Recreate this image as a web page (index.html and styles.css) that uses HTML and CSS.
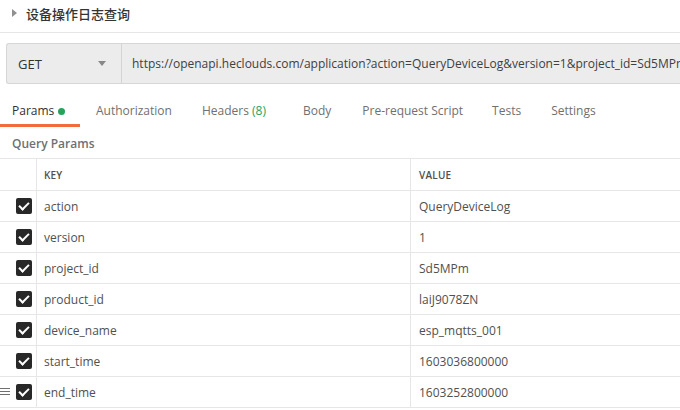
FILE: index.html
```html
<!DOCTYPE html>
<html>
<head>
<meta charset="utf-8">
<link rel="stylesheet" href="styles.css">
</head>
<body>
<div class="title">
  <span class="tri"></span>
  <span class="title-text">设备操作日志查询</span>
</div>
<div class="urlbar">
  <div class="method">
    <span>GET</span>
    <span class="caret"></span>
  </div>
  <div class="url"><span class="url-text">https://openapi.heclouds.com/application?action=QueryDeviceLog&amp;version=1&amp;project_id=Sd5MPm&amp;product_id=laiJ9078ZN</span></div>
</div>
<div class="tabs">
  <div class="tab active">Params <span class="dot"></span></div>
  <div class="tab">Authorization</div>
  <div class="tab">Headers <span class="count">(8)</span></div>
  <div class="tab">Body</div>
  <div class="tab">Pre-request Script</div>
  <div class="tab">Tests</div>
  <div class="tab">Settings</div>
</div>
<div class="qp">Query Params</div>
<div class="table">
  <div class="row head">
    <div class="c0"></div>
    <div class="c1">KEY</div>
    <div class="c2">VALUE</div>
  </div>
  <div class="row"><div class="c0"><span class="cb"></span></div><div class="c1">action</div><div class="c2">QueryDeviceLog</div></div>
  <div class="row"><div class="c0"><span class="cb"></span></div><div class="c1">version</div><div class="c2">1</div></div>
  <div class="row"><div class="c0"><span class="cb"></span></div><div class="c1">project_id</div><div class="c2">Sd5MPm</div></div>
  <div class="row"><div class="c0"><span class="cb"></span></div><div class="c1">product_id</div><div class="c2">laiJ9078ZN</div></div>
  <div class="row"><div class="c0"><span class="cb"></span></div><div class="c1">device_name</div><div class="c2">esp_mqtts_001</div></div>
  <div class="row"><div class="c0"><span class="cb"></span></div><div class="c1">start_time</div><div class="c2">1603036800000</div></div>
  <div class="row"><div class="c0"><span class="handle"><i></i><i></i><i></i></span><span class="cb"></span></div><div class="c1">end_time</div><div class="c2">1603252800000</div></div>
</div>
</body>
</html>
```
FILE: styles.css
```css
* { box-sizing: border-box; }
html, body { margin: 0; padding: 0; background: #fff; overflow: hidden; }
body {
  width: 680px; height: 410px;
  font-family: "Open Sans", "Noto Sans CJK SC", sans-serif;
  font-size: 12px;
  color: #505050;
}
.title {
  height: 33px;
  border-bottom: 1px solid #e6e6e6;
  display: flex;
  align-items: center;
  padding-left: 12px;
  padding-bottom: 6px;
}
.tri {
  width: 0; height: 0;
  border-top: 4px solid transparent;
  border-bottom: 4px solid transparent;
  border-left: 5px solid #909090;
  margin-right: 9px;
}
.title-text {
  font-family: "Noto Sans CJK SC", sans-serif;
  font-size: 13px;
  color: #333;
  font-weight: 500;
}
.urlbar {
  margin: 10px 0 0 6px;
  height: 41px;
  display: flex;
  background: #ececec;
  border: 1px solid #d6d6d6;
  border-right: none;
  border-radius: 3px 0 0 3px;
}
.method {
  width: 115px;
  flex: none;
  display: flex;
  align-items: center;
  justify-content: space-between;
  padding: 0 12px 0 11px;
  border-right: 1px solid #d4d4d4;
  color: #333;
  font-size: 13px;
}
.caret {
  width: 0; height: 0;
  border-left: 4px solid transparent;
  border-right: 4px solid transparent;
  border-top: 5px solid #888;
  margin-right: 3px;
}
.url {
  flex: 1;
  min-width: 0;
  overflow: hidden;
  display: flex;
  align-items: center;
  padding-left: 10px;
  color: #404040;
  font-size: 12px;
}
.url-text {
  white-space: nowrap;
}
.tabs {
  display: flex;
  margin-top: 15px;
  height: 28px;
}
.tab {
  padding: 0 12px;
  margin-right: 5px;
  color: #707070;
  font-size: 12px;
  line-height: 24px;
  white-space: nowrap;
}
.tab:nth-child(2) { margin-right: 6px; }
.tab:nth-child(3) { margin-right: 13px; }
.tab:nth-child(4) { margin-right: 7px; }
.tab:nth-child(5) { margin-right: 5px; }
.tab:nth-child(6) { margin-right: 6px; }
.tab.active {
  color: #303030;
  border-bottom: 3px solid #f26b3a;
  width: 80px;
  margin-right: 4px;
}
.dot {
  display: inline-block;
  width: 7px; height: 7px;
  border-radius: 50%;
  background: #26a35a;
  margin-left: 1px;
  vertical-align: 0;
}
.count { color: #26a35a; }
.qp {
  padding-left: 12px;
  padding-top: 1px;
  font-weight: 600;
  color: #707070;
  line-height: 32px;
  height: 31px;
  font-size: 12px;
}
.table { border-top: 1px solid #e6e6e6; }
.row {
  display: flex;
  height: 31px;
  border-bottom: 1px solid #e6e6e6;
  align-items: stretch;
}
.row.head { height: 32px; }
.row.head .c1, .row.head .c2 {
  font-size: 10px;
  font-weight: 600;
  color: #505050;
  letter-spacing: 0.2px;
  padding-top: 1px;
}
.c0 {
  width: 37px;
  flex: none;
  border-right: 1px solid #e6e6e6;
  display: flex;
  align-items: center;
  justify-content: flex-end;
  padding-right: 4px;
  position: relative;
}
.c1 {
  width: 374px;
  flex: none;
  border-right: 1px solid #e6e6e6;
  display: flex;
  align-items: center;
  padding-left: 7px;
  font-size: 12px;
  color: #505050;
}
.c2 {
  flex: 1;
  display: flex;
  align-items: center;
  padding-left: 8px;
  font-size: 12px;
  color: #505050;
}
.cb {
  width: 16px; height: 16px;
  border-radius: 2px;
  background: #282828;
  position: relative;
}
.cb::after {
  content: "";
  position: absolute;
  left: 5px; top: 2px;
  width: 4px; height: 8px;
  border-right: 2px solid #fff;
  border-bottom: 2px solid #fff;
  transform: rotate(45deg);
}
.handle {
  position: absolute;
  left: 0; top: 50%;
  margin-top: -4px;
  width: 10px;
  display: flex;
  flex-direction: column;
  gap: 2px;
}
.handle i {
  display: block;
  height: 1px;
  background: #707070;
}
```
